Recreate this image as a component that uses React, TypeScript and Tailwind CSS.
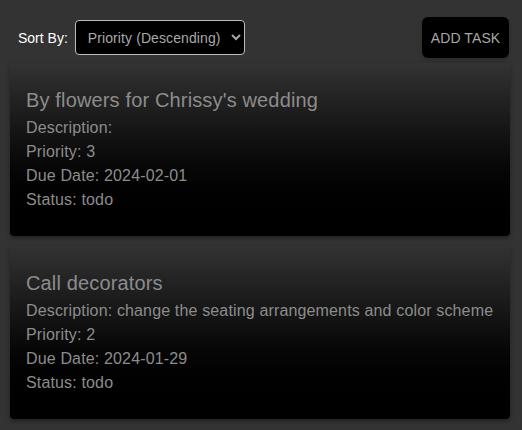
import React, { useState } from "react";

interface Task {
  title: string;
  description: string;
  priority: number;
  dueDate: string;
  status: string;
}

const TASKS: Task[] = [
  { title: "By flowers for Chrissy's wedding", description: "", priority: 3, dueDate: "2024-02-01", status: "todo" },
  { title: "Call decorators", description: "change the seating arrangements and color scheme", priority: 2, dueDate: "2024-01-29", status: "todo" },
];

export default function App() {
  const [sort, setSort] = useState("priority-desc");

  return (
    <div className="min-h-screen bg-[#333333] overflow-hidden" style={{ fontFamily: "'Liberation Sans', Arial, sans-serif" }}>
      <div className="w-[500px] ml-[10px]">
        {/* Header */}
        <div className="flex items-center justify-between pt-[17px] pl-2 pr-px">
          <div className="flex items-center gap-[7px]">
            <label className="text-white text-sm">Sort By:</label>
            <select
              value={sort}
              onChange={e => setSort(e.target.value)}
              className="w-[170px] h-[35px] bg-black text-[#a8a8a8] text-sm tracking-[0.1px] border border-[#bdbdbd] rounded pl-2 pr-1"
            >
              <option value="priority-desc">Priority (Descending)</option>
              <option value="priority-asc">Priority (Ascending)</option>
              <option value="due">Due Date</option>
            </select>
          </div>
          <button className="w-[87px] h-[41px] bg-black text-[#a8a8a8] text-sm tracking-[0.1px] rounded-md shadow-md">ADD TASK</button>
        </div>

        {/* Tasks */}
        <div className="flex flex-col gap-[10px] mt-[5px]">
          {TASKS.map((t, i) => (
            <TaskCard key={i} task={t} />
          ))}
        </div>
      </div>
    </div>
  );
}

function TaskCard({ task }: { task: Task }) {
  return (
    <div className="h-[173px] rounded bg-gradient-to-b from-[#333333] to-black shadow-[0_2px_4px_rgba(0,0,0,0.4)] px-4 pt-[26px] text-[#8c8c8c] tracking-[0.15px]">
      <h3 className="text-xl leading-[22px]">{task.title}</h3>
      <div className="mt-[5px] text-base leading-6">
        <p>Description: {task.description}</p>
        <p>Priority: {task.priority}</p>
        <p>Due Date: {task.dueDate}</p>
        <p>Status: {task.status}</p>
      </div>
    </div>
  );
}
